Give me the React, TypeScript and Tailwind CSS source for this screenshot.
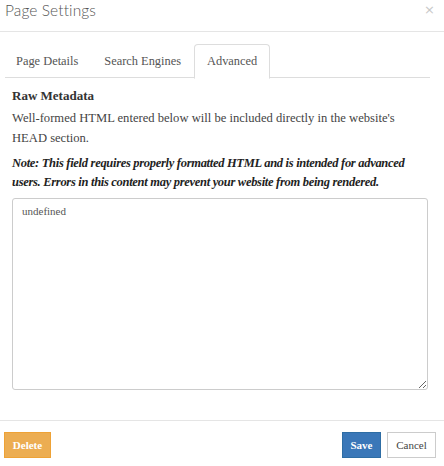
import React, { useState } from 'react';

const serif = "font-['Liberation_Serif','DejaVu_Serif',serif]";

const App = () => {
  const [tab, setTab] = useState('advanced');
  const tabs = [
    { id: 'details', name: 'Page Details' },
    { id: 'seo', name: 'Search Engines' },
    { id: 'advanced', name: 'Advanced' },
  ];

  return (
    <div className="w-[444px] h-[466px] bg-white flex flex-col">
      {/* Header */}
      <div className="h-[32px] flex items-start justify-between border-b border-[#e5e5e5] pl-[5px] pr-[9px]">
        <h1 className="font-['Lato',sans-serif] font-light text-[15.5px] leading-none text-[#555] mt-[3px] tracking-[0.1px]">
          Page Settings
        </h1>
        <button className="text-[#c8c8c8] text-[13px] leading-none mt-[3px] font-['DejaVu_Sans',sans-serif]">×</button>
      </div>

      {/* Body */}
      <div className={`flex-1 px-[5px] pt-[12px] ${serif}`}>
        {/* Tabs */}
        <div className="flex h-[34px] border-b border-[#ddd] mr-[9px]">
          {tabs.map((t, i) => (
            <button
              key={t.id}
              onClick={() => setTab(t.id)}
              className={`h-[35px] px-[12px] text-[12.4px] text-[#555] rounded-t-[4px] border ${
                i === 0 ? '-ml-[2px]' : ''
              } ${tab === t.id ? 'border-[#ddd] border-b-white bg-white' : 'border-transparent'}`}
            >
              {t.name}
            </button>
          ))}
        </div>

        <div className="px-[7px] pt-[9px]">
          <h3 className="font-bold text-[13px] text-[#333] leading-[18px]">Raw Metadata</h3>
          <p className="text-[12.6px] text-[#444] leading-[20px] mt-[3px]">
            Well-formed HTML entered below will be included directly in the website's HEAD section.
          </p>
          <p className="max-w-[400px] text-[12.5px] tracking-[-0.3px] text-[#222] font-bold italic leading-[19px] mt-[6px]">
            Note: This field requires properly formatted HTML and is intended for advanced users. Errors in this content may prevent your website from being rendered.
          </p>
          <textarea
            defaultValue="undefined"
            className={`mt-[6px] w-[416px] h-[192px] block border border-[#ccc] rounded-[3px] px-[9px] py-[4px] text-[11px] text-[#555] outline-none ${serif}`}
          />
        </div>
      </div>

      {/* Footer */}
      <div className={`h-[46px] border-t border-[#e5e5e5] flex items-start justify-between pl-[4px] pr-[8px] pt-[11px] ${serif}`}>
        <button className="w-[47px] h-[26px] bg-[#ecad52] border border-[#eea236] text-white font-bold text-[11px]">
          Delete
        </button>
        <div className="flex gap-[6px]">
          <button className="w-[39px] h-[26px] bg-[#3a77b8] border border-[#2e6da4] text-white font-bold text-[11px]">
            Save
          </button>
          <button className="w-[49px] h-[26px] bg-white border border-[#ccc] text-[#444] text-[11px]">
            Cancel
          </button>
        </div>
      </div>
    </div>
  );
};

export default App;
